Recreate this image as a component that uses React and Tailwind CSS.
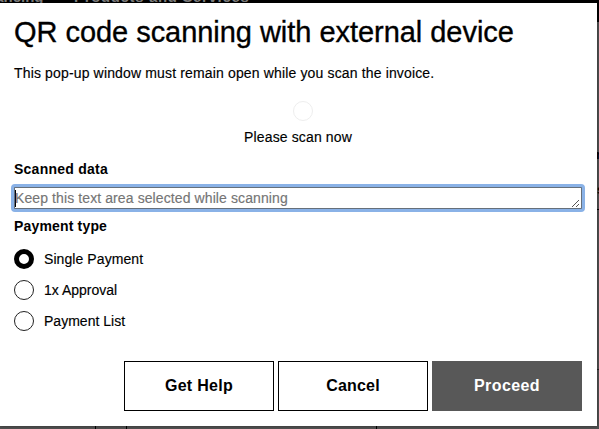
import React from "react";

const options = [
  { label: "Single Payment", checked: true, spacing: "tracking-[0.08px]" },
  { label: "1x Approval", checked: false, spacing: "tracking-[0px]" },
  { label: "Payment List", checked: false, spacing: "tracking-[0.02px]" },
];

function Radio({ label, checked, spacing }) {
  return (
    <label className="flex h-5 items-center gap-[10px]">
      <span
        className={
          checked
            ? "h-5 w-5 rounded-full border-[5px] border-black bg-white"
            : "h-5 w-5 rounded-full border border-[#222] bg-white"
        }
      />
      <span className={"text-sm leading-5 whitespace-nowrap [-webkit-text-stroke:0.15px] " + spacing}>{label}</span>
    </label>
  );
}

function Backdrop() {
  return (
    <div className="flex h-[429px] flex-col bg-[#505050]">
      <div className="h-[22px] overflow-hidden bg-black">
        <div className="-mt-[13px] flex text-[15px] leading-5 font-bold whitespace-nowrap text-[#808080]">
          <span className="-ml-[14px] w-[88px]">nancing</span>
          <span className="tracking-[0.65px]">Products and Services</span>
        </div>
      </div>
      <div className="relative grow">
        <span className="absolute top-[123px] left-[596px] text-[13px] font-bold">n</span>
        <span className="absolute top-[158px] left-[597px] text-[13px] font-bold">s</span>
        <span className="absolute top-[187px] right-0 h-px w-1 bg-black" />
        <span className="absolute top-[347px] right-0 h-px w-1 bg-[#222]" />
        <span className="absolute bottom-0 left-[95px] h-1 w-px bg-black" />
        <span className="absolute bottom-0 left-[126px] h-1 w-px bg-black" />
        <span className="absolute bottom-0 left-[376px] h-1 w-px bg-black" />
      </div>
    </div>
  );
}

export default function App() {
  return (
    <div className="relative h-[429px] w-[599px] overflow-hidden font-['Liberation_Sans',sans-serif] text-black">
      <Backdrop />
      <main className="absolute top-[3px] left-0 flex h-[423px] w-[597px] flex-col bg-white pr-[15px] pl-[14px] shadow-[0_0_3px_rgba(0,0,0,0.4)]">
        <h1 className="mt-[11px] text-[29px] leading-9 whitespace-nowrap tracking-[-0.04px] [-webkit-text-stroke:0.35px]">
          <span>QR code scanning with external device</span>
        </h1>
        <p className="mt-[13px] text-sm leading-5 whitespace-nowrap tracking-[0.15px] [-webkit-text-stroke:0.15px]">
          <span>This pop-up window must remain open while you scan the invoice.</span>
        </p>
        <div className="mt-[18px] flex flex-col items-center pl-[10px]">
          <span className="h-5 w-5 rounded-full border border-[#eeeeee]" />
        </div>
        <p className="mt-[6px] text-center text-sm leading-5 tracking-[0.13px] [-webkit-text-stroke:0.15px]">
          <span>Please scan now</span>
        </p>
        <h2 className="mt-[12px] text-sm leading-5 font-bold tracking-[0.25px]">
          <span>Scanned data</span>
        </h2>
        <div className="relative mt-[8px] flex h-[22px] w-[568px] items-center justify-between border border-[#66707b] bg-white">
          <div className="flex items-center">
            <span className="h-[17px] w-px bg-black" />
            <span className="-ml-px text-sm leading-5 whitespace-nowrap tracking-[0.1px] text-[#757575] [-webkit-text-stroke:0.15px]">
              Keep this text area selected while scanning
            </span>
          </div>
          <svg className="mr-px h-[9px] w-[9px] self-end" viewBox="0 0 9 9" fill="none" stroke="#555">
            <path d="M1 8L8 1M5 8L8 5" />
          </svg>
          <span className="pointer-events-none absolute -inset-[4px] rounded-[4px] border-[3px] border-[#8ab2e7]" />
        </div>
        <h2 className="mt-[7px] text-sm leading-5 font-bold tracking-[0.17px]">
          <span>Payment type</span>
        </h2>
        <div className="mt-[13px] flex flex-col gap-[11px]">
          {options.map((option) => (
            <Radio key={option.label} {...option} />
          ))}
        </div>
        <div className="mt-[30px] flex justify-end gap-1 text-base font-bold">
          <button className="h-[50px] w-[150px] border border-black pb-px tracking-[0.3px]">Get Help</button>
          <button className="h-[50px] w-[150px] border border-black pb-px tracking-[0.2px]">Cancel</button>
          <button className="h-[50px] w-[150px] bg-[#585858] pb-px tracking-[0.4px] text-white">Proceed</button>
        </div>
      </main>
    </div>
  );
}
